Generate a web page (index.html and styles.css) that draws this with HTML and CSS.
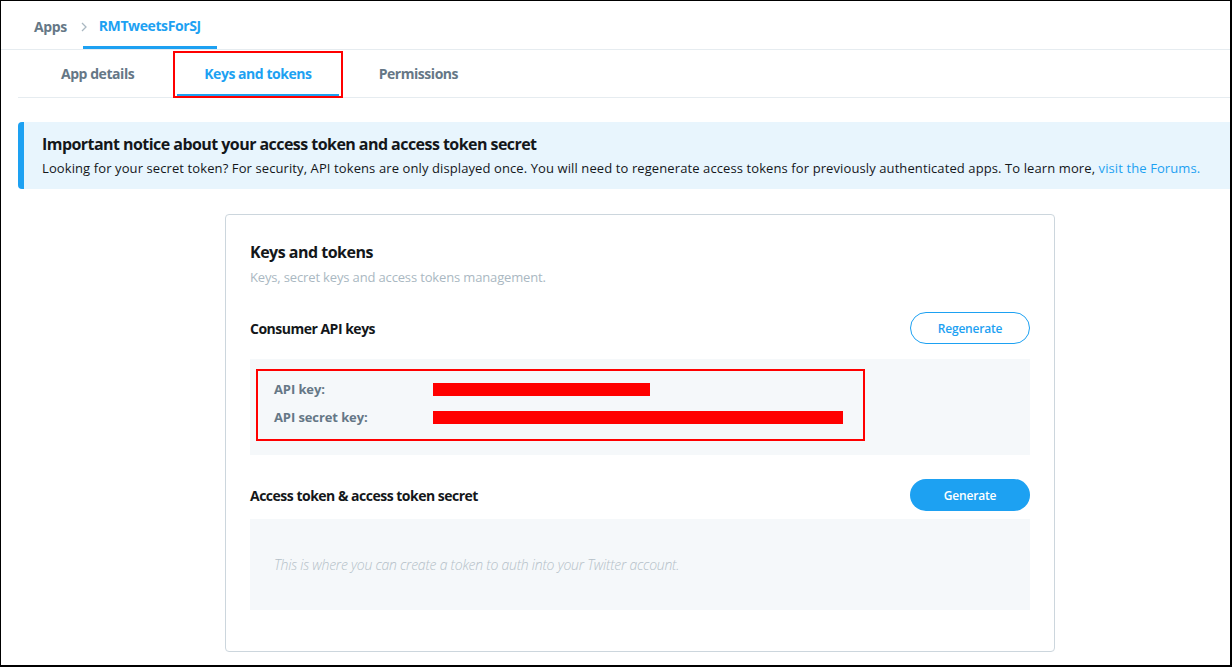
FILE: index.html
```html
<!DOCTYPE html>
<html>
<head>
<meta charset="utf-8">
<link rel="stylesheet" href="styles.css">
</head>
<body>
<div class="frame">
  <div class="crumbs">
    <a class="crumb">Apps</a>
    <svg class="chev" width="8" height="12" viewBox="0 0 8 12"><path d="M2 2l4 4-4 4" fill="none" stroke="#aab8c2" stroke-width="1.3"/></svg>
    <a class="crumb current">RMTweetsForSJ</a>
  </div>
  <div class="tabs">
    <a class="tab">App details</a>
    <a class="tab active">Keys and tokens<span class="mark tab-mark"></span></a>
    <a class="tab last">Permissions</a>
  </div>
  <div class="notice">
    <h3 class="notice-title">Important notice about your access token and access token secret</h3>
    <p class="notice-text">Looking for your secret token? For security, API tokens are only displayed once. You will need to regenerate access tokens for previously authenticated apps. To learn more, <a class="link">visit the Forums.</a></p>
  </div>
  <div class="card">
    <h2 class="card-title">Keys and tokens</h2>
    <p class="card-sub">Keys, secret keys and access tokens management.</p>
    <div class="section-head first">
      <h4 class="section-title">Consumer API keys</h4>
      <button class="btn outline">Regenerate</button>
    </div>
    <div class="keys">
      <div class="key-list">
        <div class="key-row"><span class="key-label">API key:</span><span class="redact" style="width:217px"></span></div>
        <div class="key-row"><span class="key-label">API secret key:</span><span class="redact" style="width:410px"></span></div>
        <span class="mark keys-mark"></span>
      </div>
    </div>
    <div class="section-head second">
      <h4 class="section-title">Access token &amp; access token secret</h4>
      <button class="btn solid">Generate</button>
    </div>
    <div class="tokens">
      <p class="empty">This is where you can create a token to auth into your Twitter account.</p>
    </div>
  </div>
</div>
</body>
</html>
```
FILE: styles.css
```css
* { box-sizing: border-box; }
html, body { margin: 0; padding: 0; background: #fff; }
body { font-family: "Open Sans", "Noto Sans", sans-serif; color: #14171a; }
.frame {
  width: 1232px; height: 667px; overflow: hidden;
  border: 1px solid #000; border-right-width: 2px; border-bottom-width: 2px;
}
.crumbs {
  height: 49px; display: flex; align-items: center; padding-left: 33px;
  border-bottom: 1px solid #e6ecf0; padding-top: 3px;
}
.crumb { font-size: 14px; font-weight: 700; color: #657786; letter-spacing: -0.4px; }
.chev { margin: 0 11px 0 13px; }
.crumb.current {
  color: #1da1f2; align-self: stretch; display: flex; align-items: center;
  padding: 0 16px; margin-left: -16px; border-bottom: 3px solid #1da1f2;
}
.tabs {
  margin-left: 17px; height: 48px; display: flex; align-items: stretch;
  border-bottom: 1px solid #e6ecf0; padding-left: 16px;
}
.tab {
  position: relative; display: flex; align-items: center; padding: 0 27px;
  font-size: 14px; font-weight: 700; color: #657786; letter-spacing: -0.45px;
  border-bottom: 3px solid transparent; padding-top: 3px;
}
.tab + .tab { margin-left: 16px; }
.tab.last { margin-left: 13px; }
.tab.active { color: #1da1f2; border-bottom-color: #1da1f2; }
.mark { position: absolute; border: 2px solid #f00; pointer-events: none; }
.tab-mark { left: -4px; right: -4px; top: 1px; bottom: -4px; }
.notice {
  margin: 24px 0 0 17px; height: 67px; background: #e8f5fd;
  border-left: 6px solid #1da1f2; border-radius: 4px 0 0 4px;
  padding: 11px 0 0 18px;
}
.notice-title { margin: 0; font-size: 16px; font-weight: 700; line-height: 22px; letter-spacing: -0.55px; }
.notice-text { margin: 3px 0 0; font-size: 13px; line-height: 20px; color: #14171a; letter-spacing: 0.1px; white-space: nowrap; }
.link { color: #1da1f2; }
.card {
  margin: 25px 0 0 224px; width: 830px; height: 438px;
  border: 1px solid #ccd6dd; border-radius: 4px; padding: 25px 24px 0;
}
.card-title { margin: 0; font-size: 16px; font-weight: 700; line-height: 24px; letter-spacing: -0.5px; }
.card-sub { margin: 3px 0 0; font-size: 13px; line-height: 20px; color: #aab8c2; letter-spacing: -0.15px; }
.section-head { display: flex; align-items: center; justify-content: space-between; }
.section-head.first { margin-top: 25px; }
.section-head.second { margin-top: 24px; }
.section-title { margin: 0; font-size: 14px; font-weight: 700; letter-spacing: -0.5px; }
.btn {
  font-family: inherit; font-size: 12px; font-weight: 600; height: 32px; border-radius: 16px;
  width: 120px; cursor: pointer; letter-spacing: -0.2px;
}
.btn.outline { background: #fff; color: #1da1f2; border: 1px solid #1da1f2; width: 120px; }
.btn.solid { background: #1da1f2; color: #fff; border: 0; }
.keys { margin-top: 15px; height: 96px; background: #f5f8fa; padding: 10px 0 0 6px; }
.key-list { position: relative; width: 609px; height: 72px; padding: 6px 0 0 18px; }
.keys-mark { left: 0; top: 0; right: 0; bottom: 0; }
.key-row { display: flex; align-items: center; height: 28px; }
.key-label { width: 159px; font-size: 13px; font-weight: 700; color: #657786; letter-spacing: -0.1px; }
.redact { display: block; height: 13px; background: #f00; }
.tokens { margin-top: 8px; height: 91px; background: #f5f8fa; display: flex; align-items: center; padding-left: 24px; }
.empty { margin: 0; font-size: 14px; font-style: italic; font-weight: 300; color: #b4c0c8; letter-spacing: -0.25px; }
```
